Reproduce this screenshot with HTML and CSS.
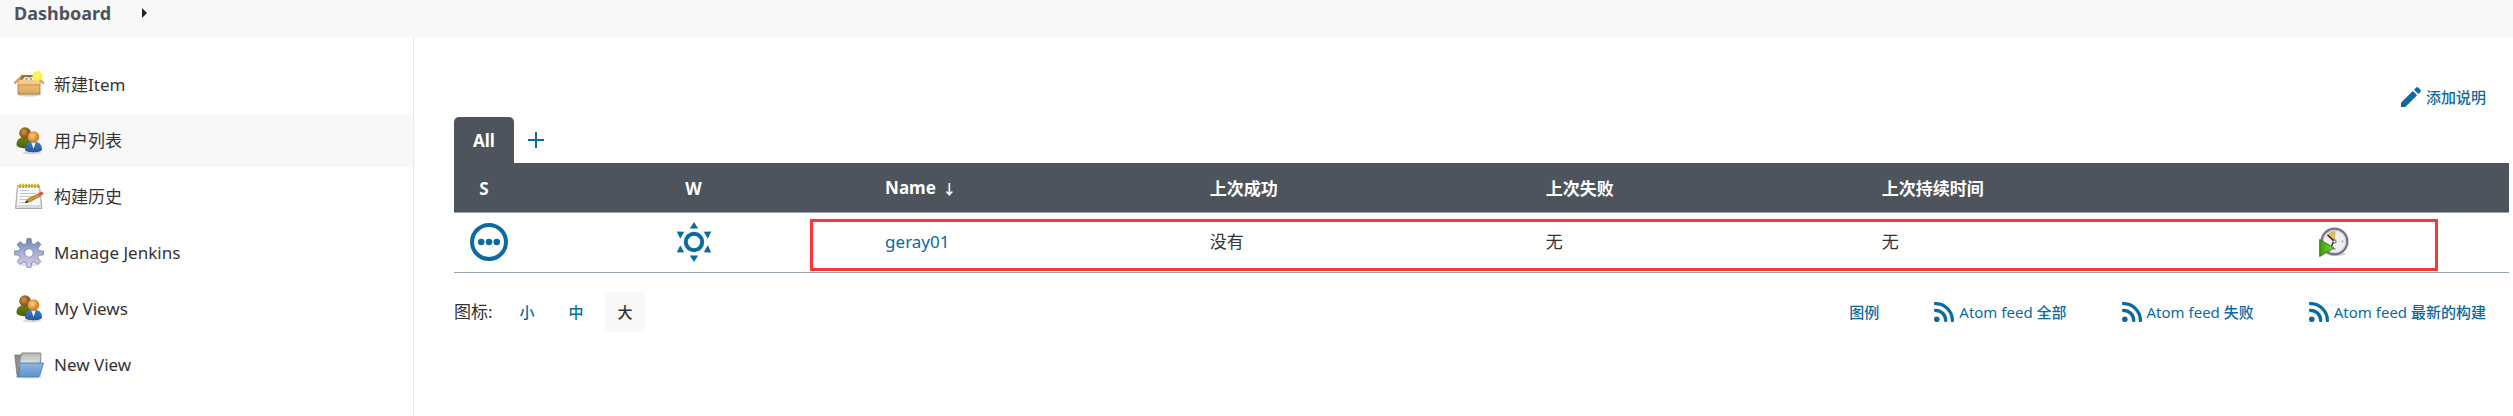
FILE: index.html
```html
<!DOCTYPE html>
<html lang="zh-CN">
<head>
<meta charset="utf-8">
<title>Dashboard [Jenkins]</title>
<link rel="stylesheet" href="styles.css">
</head>
<body>
<svg class="defs" aria-hidden="true">
  <defs>
    <linearGradient id="box" x1="0" y1="0" x2="0" y2="1"><stop offset="0" stop-color="#cf9548"/><stop offset=".5" stop-color="#e5b672"/><stop offset="1" stop-color="#dba65b"/></linearGradient>
    <radialGradient id="glow"><stop offset="0" stop-color="#fffde0"/><stop offset=".35" stop-color="#fff04a"/><stop offset=".7" stop-color="#fdf03a"/><stop offset="1" stop-color="#fdf03a" stop-opacity="0"/></radialGradient>
    <radialGradient id="brown" cx=".4" cy=".4"><stop offset="0" stop-color="#cf9544"/><stop offset="1" stop-color="#81521a"/></radialGradient>
    <radialGradient id="orange" cx=".4" cy=".4"><stop offset="0" stop-color="#ffd08c"/><stop offset="1" stop-color="#d6811b"/></radialGradient>
    <linearGradient id="green" x1="0" y1="0" x2="0" y2="1"><stop offset="0" stop-color="#6c8418"/><stop offset="1" stop-color="#4a5c08"/></linearGradient>
    <linearGradient id="blue" x1="0" y1="0" x2="0" y2="1"><stop offset="0" stop-color="#3c7cc6"/><stop offset="1" stop-color="#2a569a"/></linearGradient>
    <linearGradient id="gear" x1="0" y1="0" x2="0" y2="1"><stop offset="0" stop-color="#6e86b4"/><stop offset=".5" stop-color="#a9b0d4"/><stop offset="1" stop-color="#d8cfe8"/></linearGradient>
    <linearGradient id="paper" x1="0" y1="0" x2="0" y2="1"><stop offset="0" stop-color="#b4b4b4"/><stop offset="1" stop-color="#f2f2f2"/></linearGradient>
    <linearGradient id="folder" x1="0" y1="0" x2="0" y2="1"><stop offset="0" stop-color="#8fb6e0"/><stop offset="1" stop-color="#5e93cf"/></linearGradient>
    <linearGradient id="play" x1="0" y1="0" x2="1" y2="0"><stop offset="0" stop-color="#3d970d"/><stop offset="1" stop-color="#83dc38"/></linearGradient>
    <symbol id="i-rss" viewBox="0 0 20 20"><circle cx="2.8" cy="17.2" r="2.8" fill="currentColor"/><path d="M1.5 8.3A10.2 10.2 0 0 1 11.700 18.500M1.500 1.600A16.900 16.900 0 0 1 18.400 18.500" fill="none" stroke="currentColor" stroke-width="3.300" stroke-linecap="round"/></symbol>
    <symbol id="i-people" viewBox="0 0 30 30">
      <ellipse cx="18" cy="26.500" rx="9" ry="1.800" fill="#000" opacity=".15"/>
      <path d="M2.500 19c0-4.500 2-7 5.500-7.500h6c3 1 4 4 4 9-2 2.500-14 2.500-15.500-1.500z" fill="url(#green)"/>
      <circle cx="11" cy="7" r="5.800" fill="url(#brown)"/>
      <path d="M11 24c0-4.500 2-7.500 6-8h5c4 .5 6 3.500 6 8-1.500 3-15.500 3-17 0z" fill="url(#blue)"/>
      <path d="M17.300 16.500h4.400l-2.200 6.500z" fill="#eef4fb"/>
      <circle cx="19.500" cy="11" r="5.800" fill="url(#orange)"/>
    </symbol>
  </defs>
</svg>

<nav class="crumbs" aria-label="Breadcrumb">
  <a href="#">Dashboard</a>
  <svg class="crumb-arrow" viewBox="0 0 6 10"><path d="M0 0l5 5-5 5z" fill="#222"/></svg>
</nav>

<div class="page">
  <nav class="side">
    <a class="task" href="#">
      <svg class="task-icon" viewBox="0 0 30 30"><ellipse cx="15" cy="24.500" rx="12" ry="2" fill="#000" opacity=".18"/><path d="M8 5h15l3 7H4z" fill="#b98444"/><path d="M8 5h15l1 4H7z" fill="#9d6c30"/><path d="M9 9q2-3 4-2t4 0 5 2v3H9z" fill="#efece6"/><circle cx="12.500" cy="9" r="1" fill="#8b8b8b"/><circle cx="17" cy="9" r="1" fill="#8b8b8b"/><path d="M4 11h22v13H4z" fill="url(#box)" stroke="#ad7227" stroke-width=".8"/><path d="M5 10h20l2.500 4H2.500z" fill="#f0cb92"/><path d="M8 5L4 11.500 1 14 0 12.500zM22 5l4 6.500 3.500 2.500.5-1.500z" fill="#dba866" stroke="#b37a35" stroke-width=".5"/><circle cx="23.500" cy="6" r="5.800" fill="url(#glow)"/></svg>
      <span>新建Item</span></a>
    <a class="task task-current" href="#"><svg class="task-icon"><use href="#i-people"/></svg><span>用户列表</span></a>
    <a class="task" href="#">
      <svg class="task-icon" viewBox="0 0 30 30"><path d="M3.500 3.500h22l2.500 23H1.500z" fill="#dadada" stroke="#9b9b9b" stroke-width=".8"/><path d="M4.500 5h20l1.800 18H3z" fill="#fafafa"/><path d="M6 8.500h9M6 11.500h16M5.500 14.500h14M5.500 17.500h8M5 20.500h7" stroke="#bdbdbd" stroke-width=".9"/><path d="M5 3.500h20" stroke="#d9bd2e" stroke-width="3.500" stroke-dasharray="2 1"/><path d="M5 5h20" stroke="#8a7718" stroke-width="1" stroke-dasharray="2 1"/><path d="M11.500 20.500l2.500-3.500 11-5.500 1.500 2.500-11.500 6z" fill="#d99b31" stroke="#7a501a" stroke-width=".7"/><path d="M11 21l1.700-2.700 1.600 1.700z" fill="#222"/><path d="M24.500 11l3-1.500q2 .5 2 2.500L26.500 14z" fill="#df5050"/></svg>
      <span>构建历史</span></a>
    <a class="task" href="#">
      <svg class="task-icon" viewBox="0 0 30 30"><ellipse cx="15" cy="26" rx="10" ry="2.500" fill="#000" opacity=".12"/><path fill-rule="evenodd" d="M12.300 5.500L13 .6h4l.7 4.900 2.400 1 4-2.900 2.800 2.800-3 4 1 2.400 4.700.3v3.800l-4.700.3-1 2.400 3 4-2.800 2.800-4-2.900-2.400 1-.7 4.900h-4l-.7-4.900-2.400-1-4 2.900-2.800-2.800 3-4-1-2.400L.4 16.900v-3.800l4.700-.3 1-2.400-3-4 2.800-2.800 4 2.900zM15 10.800a4.200 4.200 0 1 0 0 8.400 4.200 4.200 0 0 0 0-8.400z" fill="url(#gear)" stroke="#6676a0" stroke-width=".7"/></svg>
      <span>Manage Jenkins</span></a>
    <a class="task" href="#"><svg class="task-icon"><use href="#i-people"/></svg><span>My Views</span></a>
    <a class="task" href="#">
      <svg class="task-icon" viewBox="0 0 30 30"><ellipse cx="15" cy="27" rx="13" ry="1.500" fill="#000" opacity=".2"/><path d="M.8 5h6l1-2h19v8l-3 14.500H3z" fill="#8e8e8e" stroke="#6f6f6f" stroke-width=".7"/><path d="M8 3.200h19l-1.500 14H4.500z" fill="url(#paper)" stroke="#8d8d8d" stroke-width=".5"/><path d="M9 7h15M8.500 9h15" stroke="#c9c9c9" stroke-width=".7"/><path d="M6 13h23.500l-3.700 12.500q-.5 1.300-2 1.300H2.800q2.200-1 2.400-5z" fill="url(#folder)" stroke="#3f74b3" stroke-width=".8"/></svg>
      <span>New View</span></a>
  </nav>

  <main class="main">
    <div class="describe">
      <a class="link" href="#"><svg class="small-icon" viewBox="0 0 20 20"><path d="M0 20v-4.300L11.800 3.900l4.300 4.300L4.300 20zM13 2.700L15 .7q1.200-1.200 2.400 0l1.900 1.900q1.200 1.200 0 2.400l-2 2z" fill="currentColor"/></svg><b>添加说明</b></a>
    </div>

    <div class="tabs">
      <a class="tab" href="#">All</a>
      <a class="tab-add" href="#" aria-label="New View"><svg viewBox="0 0 16 16"><path d="M8 0v16M0 8h16" stroke="currentColor" stroke-width="2"/></svg></a>
    </div>

    <div class="jobs">
      <table class="job-table">
        <colgroup><col class="c-status"><col class="c-weather"><col class="c-name"><col class="c-run"><col class="c-run"><col class="c-duration"><col></colgroup>
        <thead>
          <tr><th><span class="head-s">S</span></th><th><span class="head-w">W</span></th><th>Name <span class="sort">↓</span></th><th>上次成功</th><th>上次失败</th><th>上次持续时间</th><th></th></tr>
        </thead>
        <tbody>
          <tr>
            <td><svg class="state-icon" viewBox="0 0 38 38" fill="currentColor"><circle cx="19" cy="19" r="17" fill="none" stroke="currentColor" stroke-width="4"/><circle cx="11.200" cy="19" r="3.300"/><circle cx="19" cy="19" r="3.300"/><circle cx="26.800" cy="19" r="3.300"/></svg></td>
            <td><svg class="weather-icon" viewBox="0 0 36 40" fill="currentColor"><circle cx="18" cy="20" r="8.200" fill="none" stroke="currentColor" stroke-width="4"/><path d="M18 0l4.200 6.500h-8.400zM18 40l4.200-6.500h-8.400zM.8 9.500l7.400.2-4 7zM35.200 9.500l-7.400.2 4 7zM.8 30.500l7.400-.2-4-7zM35.200 30.500l-7.400-.2 4-7z"/></svg></td>
            <td><a href="#">geray01</a></td>
            <td>没有</td>
            <td>无</td>
            <td>无</td>
            <td><button class="build" aria-label="Build"><svg viewBox="0 0 30 30"><ellipse cx="17" cy="27" rx="10" ry="2" fill="#000" opacity=".15"/><circle cx="15.500" cy="14.500" r="12.800" fill="#eeeeea" stroke="#77758f" stroke-width="2.400"/><circle cx="15.500" cy="14.500" r="11.200" fill="none" stroke="#c4c4cf" stroke-width=".8"/><path d="M15.500 14.500L8.500 8q3-4 7.500-3.500z" fill="#e0bd58" stroke="#b99a47" stroke-width=".5"/><path d="M8.500 8l6.500 6-2.500 5" fill="none" stroke="#222" stroke-width="1.400"/><circle cx="15.500" cy="14.500" r="1.600" fill="#fff" stroke="#333" stroke-width=".8"/><circle cx="23.500" cy="14.500" r="1" fill="#aaa"/><circle cx="15.500" cy="22" r="1" fill="#888"/><path d="M.7 12.500L15 21 .7 29.500z" fill="url(#play)" stroke="#2c760b" stroke-width=".9"/></svg></button></td>
          </tr>
        </tbody>
      </table>
      <div class="highlight"></div>
    </div>

    <div class="foot">
      <div class="sizes"><span class="sizes-label">图标:</span><a class="size" href="#">小</a><a class="size" href="#">中</a><span class="size size-current">大</span></div>
      <div class="feeds">
        <a class="link" href="#"><b>图例</b></a>
        <a class="link" href="#"><svg class="small-icon"><use href="#i-rss"/></svg><span>Atom feed <b>全部</b></span></a>
        <a class="link" href="#"><svg class="small-icon"><use href="#i-rss"/></svg><span>Atom feed <b>失败</b></span></a>
        <a class="link" href="#"><svg class="small-icon"><use href="#i-rss"/></svg><span>Atom feed <b>最新的构建</b></span></a>
      </div>
    </div>
  </main>
</div>
</body>
</html>
```
FILE: styles.css
```css
* { box-sizing: border-box; }
body {
  margin: 0;
  min-height: 100vh;
  display: flex;
  flex-direction: column;
  background: #fff;
  color: #333;
  font: 17px/24px "Noto Sans", "Noto Sans CJK SC", sans-serif;
}
a { color: #0b6aa2; text-decoration: none; }
svg { display: block; flex: none; }
.defs { position: absolute; width: 0; height: 0; }

.crumbs {
  display: flex;
  align-items: center;
  gap: 31px;
  padding: 0 14px 12px;
  height: 37px;
  background: #f8f8f8;
}
.crumbs a { color: #4d545d; font-weight: 700; font-size: 18px; }
.crumb-arrow { width: 6px; height: 10px; }

.page { display: flex; flex: 1; }
.side {
  width: 414px;
  flex: none;
  display: flex;
  flex-direction: column;
  gap: 4px;
  padding-top: 22px;
  border-right: 1px solid #eaeaea;
}
.task {
  display: flex;
  align-items: center;
  gap: 10px;
  padding: 0 14px 1px;
  height: 52px;
  color: #333;
}
.task-current { background: #f8f8f8; }
.task-icon { width: 30px; height: 30px; }

.main { flex: 1; min-width: 0; padding: 48px 4px 0 40px; }
.link {
  display: flex;
  align-items: center;
  gap: 5px;
  font-size: 15px;
}
.link b { font-weight: 500; }
.small-icon { width: 20px; height: 20px; }
.describe { display: flex; justify-content: flex-end; padding-right: 23px; }

.tabs { display: flex; align-items: center; gap: 14px; margin-top: 8px; }
.tab {
  padding: 12px 19px 10px;
  border-radius: 5px 5px 0 0;
  background: #4d545d;
  color: #fff;
  font-weight: 700;
}
.tab-add svg { width: 16px; height: 16px; }

.jobs { position: relative; }
.job-table { width: 100%; table-layout: fixed; border-collapse: collapse; text-align: left; }
.job-table th, .job-table td { padding: 0 0 0 16px; border-bottom: 1px solid #98a6b0; }
.job-table th { height: 49px; padding-top: 3px; background: #4d545d; color: #fff; font-weight: 700; }
.job-table td { height: 60px; padding-bottom: 1px; }
.job-table td svg { color: #0b6aa2; }
.c-status { width: 10%; }
.c-weather { width: 10.2%; }
.c-name { width: 15.8%; }
.c-run { width: 16.35%; }
.c-duration { width: 21.3%; }
.head-s, .head-w { display: block; width: 28px; text-align: center; }
.head-w { width: 36px; }
.sort { margin-left: 2px; font-size: 14px; }
.state-icon { width: 38px; height: 38px; }
.weather-icon { width: 36px; height: 40px; }
.build { display: block; padding: 0; border: 0; background: none; }
.build svg { width: 30px; height: 30px; }
.highlight {
  position: absolute;
  top: 56px;
  right: 71px;
  bottom: 2px;
  left: 356px;
  border: 3px solid #fb3838;
  pointer-events: none;
}

.foot { display: flex; justify-content: space-between; align-items: center; padding: 19px 23px 0 0; }
.sizes, .feeds { display: flex; align-items: center; }
.sizes { gap: 8px; }
.sizes-label { margin-right: 6px; }
.size {
  width: 41px;
  padding: 8px 0;
  border-radius: 5px;
  text-align: center;
  font-size: 15px;
  font-weight: 500;
}
.size-current { background: #f8f8f8; }
.feeds { gap: 55px; }
```
